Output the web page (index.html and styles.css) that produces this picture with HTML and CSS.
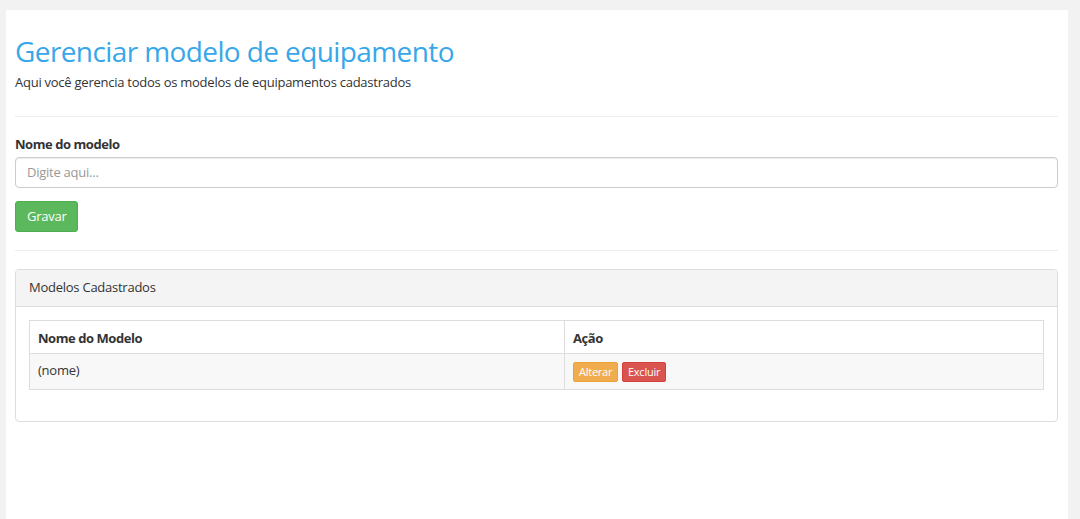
FILE: index.html
```html
<!DOCTYPE html>
<html lang="pt-BR">
<head>
<meta charset="utf-8">
<title>Gerenciar modelo de equipamento</title>
<link rel="stylesheet" href="styles.css">
</head>
<body>
<div class="page">
  <header class="page-header">
    <h1 class="title">Gerenciar modelo de equipamento</h1>
    <p class="subtitle">Aqui você gerencia todos os modelos de equipamentos cadastrados</p>
  </header>
  <hr class="divider">
  <form class="form">
    <label class="label" for="nome">Nome do modelo</label>
    <input class="input" id="nome" type="text" placeholder="Digite aqui...">
    <button class="btn btn-success" type="button">Gravar</button>
  </form>
  <hr class="divider divider-2">
  <section class="panel">
    <div class="panel-heading">Modelos Cadastrados</div>
    <div class="panel-body">
      <table class="table">
        <thead>
          <tr><th class="col-name">Nome do Modelo</th><th>Ação</th></tr>
        </thead>
        <tbody>
          <tr>
            <td>(nome)</td>
            <td><span class="actions"><button class="btn-xs btn-warning" type="button">Alterar</button><button class="btn-xs btn-danger" type="button">Excluir</button></span></td>
          </tr>
        </tbody>
      </table>
    </div>
  </section>
</div>
</body>
</html>
```

FILE: styles.css
```css
* { box-sizing: border-box; }
html, body { height: 100%; }
body {
  margin: 0;
  background: #f2f2f2;
  font-family: "Open Sans", "Noto Sans", sans-serif;
  font-size: 13px;
  line-height: 1.42857;
  letter-spacing: -0.25px;
  color: #333;
  overflow: hidden;
}
.page {
  margin: 10px 0 0 6px;
  width: 1062px;
  min-height: 100%;
  background: #fff;
  padding: 26px 10px 40px 9px;
}
.title {
  margin: 0;
  font-size: 28px;
  font-weight: 400;
  line-height: 1.1;
  letter-spacing: -0.6px;
  color: #38a7ea;
}
.subtitle {
  margin: 6px 0 0;
  font-size: 13px;
  color: #333;
}
.divider {
  border: 0;
  border-top: 1px solid #eee;
  margin: 25px 0 18px;
}
.divider-2 { margin: 18px 0 18px; }
.form { display: flex; flex-direction: column; align-items: flex-start; }
.label {
  font-weight: 700;
  letter-spacing: -0.45px;
  margin-bottom: 3px;
}
.input {
  width: 100%;
  height: 31px;
  padding: 6px 11px;
  font-family: inherit;
  font-size: 13px;
  letter-spacing: -0.25px;
  color: #555;
  border: 1px solid #ccc;
  border-radius: 4px;
  box-shadow: inset 0 1px 1px rgba(0,0,0,.075);
  margin-bottom: 13px;
}
.input::placeholder { color: #999; }
.btn {
  font-family: inherit;
  font-size: 13px;
  letter-spacing: -0.25px;
  line-height: 1.42857;
  padding: 5px 11px;
  border-radius: 3px;
  border: 1px solid transparent;
  cursor: pointer;
}
.btn-success {
  background: #5cb85c;
  border-color: #4cae4c;
  color: #fff;
  height: 31px;
  width: 63px;
}
.panel {
  border: 1px solid #ddd;
  border-radius: 4px;
  background: #fff;
}
.panel-heading {
  background: #f4f4f4;
  border-bottom: 1px solid #ddd;
  border-radius: 3px 3px 0 0;
  padding: 8px 13px 9px;
  height: 37px;
  color: #333;
}
.panel-body {
  padding: 13px 13px 31px;
}
.table {
  width: 100%;
  border-collapse: collapse;
  border: 1px solid #ddd;
}
.table th, .table td {
  border: 1px solid #ddd;
  padding: 7px 8px;
  text-align: left;
  vertical-align: top;
}
.table th { font-weight: 700; letter-spacing: -0.45px; padding-top: 8px; padding-bottom: 6px; }
.table .col-name { width: 535px; }
.table tbody tr { background: #f8f8f8; }
.table tbody td { height: 36px; }
.actions { display: flex; gap: 4px; padding-top: 1px; }
.btn-xs {
  font-family: inherit;
  font-size: 11px;
  letter-spacing: -0.25px;
  line-height: 1.5;
  padding: 1px 5px;
  border-radius: 2px;
  border: 1px solid transparent;
  color: #fff;
  height: 20px;
  cursor: pointer;
}
.btn-warning { background: #f0ad4e; border-color: #eea236; width: 45px; }
.btn-danger { background: #d9534f; border-color: #d43f3a; width: 44px; }
```
